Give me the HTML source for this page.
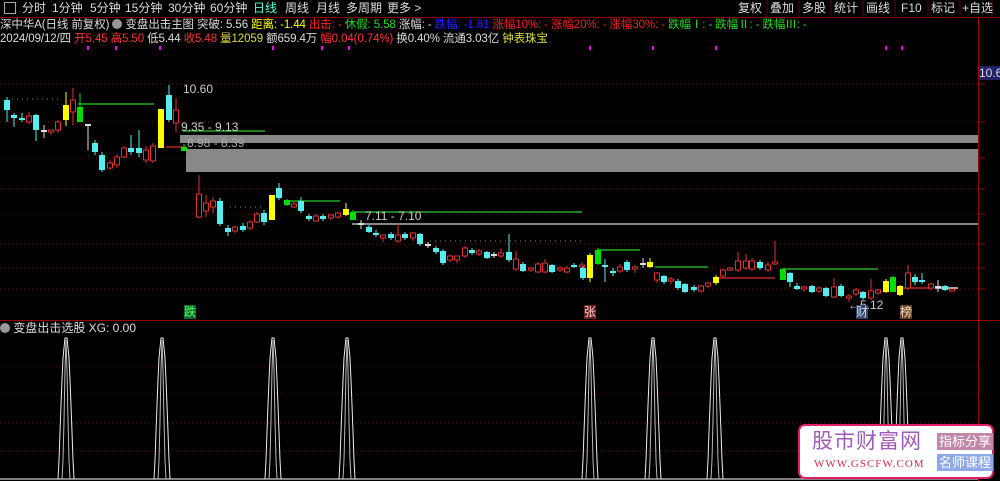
<!DOCTYPE html>
<html><head><meta charset="utf-8"><style>
body{margin:0;background:#000;width:1000px;height:481px;overflow:hidden;font-family:"Liberation Sans","Noto Sans CJK SC",sans-serif;}
#wrap{position:relative;width:1000px;height:481px;}
.t{position:absolute;font-size:12px;white-space:nowrap;line-height:14px;}
.tb{position:absolute;top:1px;color:#ddd;font-size:12px;line-height:14px;white-space:nowrap}
.hd{font-size:11.5px;letter-spacing:-0.1px}
</style></head><body><div id="wrap">
<svg id="s" width="1000" height="481" style="position:absolute;left:0;top:0"></svg>
<div style="position:absolute;left:4px;top:2px;width:10px;height:10px;border:1px solid #aaa"></div>
<div class="tb" style="left:22px">分时</div><div class="tb" style="left:52px">1分钟</div><div class="tb" style="left:90px">5分钟</div><div class="tb" style="left:125px">15分钟</div><div class="tb" style="left:168px">30分钟</div><div class="tb" style="left:210px">60分钟</div><div class="tb" style="left:253px;color:#5fd">日线</div><div class="tb" style="left:285px">周线</div><div class="tb" style="left:316px">月线</div><div class="tb" style="left:346px">多周期</div><div class="tb" style="left:387px">更多 &gt;</div>
<div class="t" style="left:735px;top:1px;color:#ddd;font-size:12px;word-spacing:0">
<span style="position:absolute;left:3px">复权</span><span style="position:absolute;left:35px">叠加</span><span style="position:absolute;left:67px">多股</span><span style="position:absolute;left:99px">统计</span><span style="position:absolute;left:131px">画线</span><span style="position:absolute;left:166px">F10</span><span style="position:absolute;left:196px">标记</span><span style="position:absolute;left:227px">+自选</span></div>
<div class="t hd" style="left:0;top:18px;color:#ddd">深中华A(日线 前复权) <span style="display:inline-block;width:10px;height:10px;border-radius:5px;background:#999;vertical-align:-1px"></span> 变盘出击主图 突破: 5.56 <span style="color:#ff0">距离: -1.44</span> <span style="color:#f22">出击: -</span> <span style="color:#2d2">休假: 5.58</span> 涨幅: - <span style="color:#22f">跌幅: -1.81</span> <span style="color:#e22">涨幅10%: - 涨幅20%: - 涨幅30%: -</span> <span style="color:#2d2">跌幅Ⅰ: - 跌幅Ⅱ: - 跌幅Ⅲ: -</span></div>
<div class="t hd" style="left:0;top:32px;color:#ddd">2024/09/12/四 <span style="color:#f33">开5.45 高5.50</span> 低5.44 <span style="color:#f33">收5.48</span> <span style="color:#dd4">量12059</span> 额659.4万 <span style="color:#f33">幅0.04(0.74%)</span> 换0.40% 流通3.03亿 <span style="color:#dd4">钟表珠宝</span></div>
<div class="t" style="left:0;top:321px;color:#ddd"><span style="display:inline-block;width:10px;height:10px;border-radius:5px;background:#999;vertical-align:-1px"></span> 变盘出击选股 XG: 0.00</div>
<div class="t" style="left:979px;top:66px;background:#226;color:#ddd;width:21px;overflow:hidden">10.6</div>
<div class="t" style="left:183px;top:82px;color:#ccc">10.60</div>
<div class="t" style="left:181px;top:120px;color:#ccc">9.35 - 9.13</div>
<div class="t" style="left:187px;top:136px;color:#aaa">8.98 - 8.39</div>
<div class="t" style="left:365px;top:209px;color:#ccc">7.11 - 7.10</div>
<div class="t" style="left:848px;top:298px;color:#ccc">←5.12</div>
<div class="t" style="left:184px;top:305px;background:#163;color:#5f5">跌</div>
<div class="t" style="left:584px;top:305px;background:#622;color:#fcc">张</div>
<div class="t" style="left:856px;top:305px;background:#346;color:#cde">财</div>
<div class="t" style="left:900px;top:305px;background:#642;color:#fdc">榜</div>
<div style="position:absolute;left:798px;top:424px;width:192px;height:51px;background:#fff;border:2px solid #e0206a;border-radius:7px">
<div class="t" style="left:12px;top:4px;font-size:21px;line-height:24px;color:#a05ab8;letter-spacing:1px">股市财富网</div>
<div class="t" style="left:14px;top:31px;font-size:11px;color:#d03050;font-family:'Liberation Serif',serif;letter-spacing:1px">WWW.GSCFW.COM</div>
<div class="t" style="left:137px;top:7px;background:#c087a8;color:#fff;font-size:13px;line-height:17px;padding:0 2px">指标分享</div>
<div class="t" style="left:137px;top:28px;background:#8fa8e8;color:#fff;font-size:13px;line-height:17px;padding:0 2px">名师课程</div>
</div>
</div>
<script>
const s=document.getElementById('s');let h='';
function L(x1,y1,x2,y2,c,w,d){h+=`<line x1="${x1}" y1="${y1}" x2="${x2}" y2="${y2}" stroke="${c}" stroke-width="${w||1}"${d?` stroke-dasharray="${d}"`:''}/>`}
function R(x,y,w,hh,f,st){h+=`<rect x="${x}" y="${y}" width="${w}" height="${hh}" fill="${f}"${st?` stroke="${st}"`:''}/>`}
L(0,17.5,1000,17.5,'#800');
[84,122,158,189,214,244,268,289,366,394,423,451].forEach(y=>L(0,y,978,y,'#6a1414',1,'1 3'));
L(978.5,18,978.5,481,'#900');L(0,320.5,1000,320.5,'#900');
[84,122,158,189,214,244,268,289].forEach(y=>L(979,y,985,y,'#900'));
[88,116,160,273,322,349,590,653,716,886,902].forEach(x=>L(x,46,x,50,'#f0f',2));
R(180,135,798,8,'#888');R(186,149,792,23,'#888');L(352,224,978,224,'#888',2);
const lines=[[78,154,104,'#2a2'],[183,265,131,'#2a2'],[166,186,147,'#b22'],[287,340,201,'#2a2'],[353,582,212,'#2a2'],[597,640,250,'#2a2'],[655,708,267,'#2a2'],[716,775,278,'#b22'],[783,878,269,'#2a2'],[900,930,288,'#b22'],[935,958,288,'#ddd']];
lines.forEach(a=>L(a[0],a[2],a[1],a[2],a[3],1.5));
[[12,60,99],[230,265,207],[430,585,241]].forEach(a=>L(a[0],a[2],a[1],a[2],'#888',1,'1 4'));
const C={r:'#d33',c:'#5ee',y:'#ff0',g:'#0d0',w:'#ddd'};
const k=[[7,100,110,97,122,'c'],[14,115,118,113,127,'c'],[22,118,120,113,122,'c'],[29,116,122,112,124,'r'],[36,115,130,114,141,'c'],[44,130,132,125,138,'w'],[51,130,132,130,135,'r'],[58,122,130,120,133,'r'],[66,105,120,92,126,'y'],[73,100,112,88,125,'r'],[80,107,122,93,122,'g'],[88,124,126,125,150,'w'],[95,143,152,140,155,'c'],[102,155,170,152,172,'c'],[110,163,168,160,170,'r'],[117,157,165,154,168,'r'],[124,148,157,146,158,'r'],[131,148,152,135,155,'c'],[139,148,153,130,157,'c'],[146,150,160,146,163,'r'],[153,146,161,143,163,'r'],[161,109,148,109,148,'y'],[169,95,120,85,122,'c'],[176,110,123,98,132,'r'],[184,147,151,144,151,'g'],[199,194,217,175,218,'r'],[206,203,211,195,217,'r'],[213,201,207,197,213,'r'],[220,201,224,198,226,'c'],[228,228,232,225,236,'c'],[235,227,231,226,233,'r'],[243,226,230,223,232,'c'],[250,222,228,220,230,'r'],[257,214,222,212,223,'r'],[264,213,222,210,225,'c'],[272,195,220,195,220,'y'],[279,188,198,183,200,'c'],[287,200,205,199,206,'g'],[294,204,207,202,208,'r'],[301,201,211,197,213,'c'],[309,216,219,214,221,'c'],[316,216,221,214,222,'r'],[323,216,219,214,221,'c'],[331,215,218,214,220,'r'],[338,213,217,212,219,'r'],[346,209,215,203,216,'y'],[353,212,220,210,220,'g'],[361,223,225,220,229,'w'],[369,227,232,225,233,'c'],[376,233,235,230,237,'c'],[383,235,238,235,242,'r'],[391,234,238,232,240,'c'],[398,235,241,224,243,'r'],[405,234,238,232,240,'c'],[413,233,238,232,241,'r'],[420,234,244,233,246,'c'],[428,244,246,242,248,'w'],[436,248,252,246,254,'c'],[443,251,263,249,265,'c'],[450,256,260,255,262,'r'],[457,256,260,256,263,'r'],[465,248,256,246,258,'r'],[472,250,253,248,255,'c'],[479,251,254,249,256,'r'],[487,252,258,251,259,'c'],[494,254,256,252,258,'w'],[501,253,256,248,258,'r'],[509,252,260,234,262,'c'],[516,259,269,251,271,'r'],[523,264,271,262,272,'c'],[531,268,270,267,272,'r'],[538,264,272,262,273,'r'],[545,263,272,259,273,'r'],[552,265,272,264,273,'c'],[560,268,270,266,272,'r'],[567,268,272,266,273,'r'],[574,265,267,263,268,'c'],[582,265,267,262,268,'r'],[583,268,278,266,280,'c'],[590,255,278,253,282,'y'],[598,250,264,248,265,'g'],[605,265,267,259,282,'c'],[613,271,273,268,276,'c'],[620,267,271,264,273,'r'],[627,262,270,260,272,'c'],[635,267,269,265,273,'r'],[643,263,265,258,268,'w'],[650,262,267,258,268,'y'],[657,273,280,272,283,'r'],[664,276,282,275,284,'c'],[671,279,281,277,284,'r'],[678,281,288,279,290,'c'],[685,284,292,283,293,'c'],[694,287,290,285,292,'c'],[701,286,291,285,293,'r'],[708,283,286,282,288,'r'],[716,277,283,275,285,'y'],[723,270,276,269,278,'r'],[730,268,270,267,271,'r'],[738,261,270,252,272,'r'],[746,261,268,254,270,'r'],[752,261,269,258,271,'r'],[760,262,268,260,270,'c'],[768,265,270,262,272,'r'],[775,262,264,241,265,'r'],[783,269,280,268,280,'g'],[790,273,282,272,287,'c'],[797,286,289,283,290,'c'],[804,287,289,286,292,'r'],[812,286,292,285,293,'c'],[819,288,291,286,293,'r'],[826,288,296,287,297,'c'],[834,287,297,278,298,'r'],[841,286,296,284,297,'c'],[849,296,298,294,302,'r'],[856,290,294,288,296,'r'],[863,292,298,291,300,'c'],[871,291,298,279,300,'r'],[878,290,293,289,295,'r'],[886,281,292,279,293,'y'],[893,277,292,276,292,'g'],[900,286,295,285,296,'y'],[908,273,288,265,290,'r'],[915,277,282,274,285,'c'],[922,280,282,273,284,'c'],[931,284,288,283,290,'r'],[938,286,288,280,292,'w'],[945,286,290,285,291,'c'],[952,289,291,289,291,'r']];
k.forEach(a=>{const[x,t,b,hi,lo,ty]=a;const c=C[ty];L(x,hi,x,lo,c);if(ty=='r')h+=`<rect x="${x-2.5}" y="${t}" width="5" height="${Math.max(b-t,1)}" fill="#000" stroke="${c}"/>`;else R(x-3,t,6,Math.max(b-t,1.5),c);});
L(0,479,978,479,'#fff');
[66,162,273,347,590,653,715,886,902].forEach(x=>{let p=`${x-8},479 ${x-7},460 ${x-6},432 ${x-5},405 ${x-4},380 ${x-3},358 ${x-1},338 ${x+1},338 ${x+3},358 ${x+4},380 ${x+5},405 ${x+6},432 ${x+7},460 ${x+8},479`;h+=`<polyline points="${p}" fill="none" stroke="#eee" stroke-width="1"/>`;let q=`${x-4},479 ${x-3},460 ${x-2},420 ${x-1},370 ${x},340 ${x+1},370 ${x+2},420 ${x+3},460 ${x+4},479`;h+=`<polyline points="${q}" fill="none" stroke="#bbb" stroke-width="1"/>`;});
[767,799,831,863,895,928,960,992].forEach(x=>L(x,0,x,17,'#600'));
s.innerHTML=h;
</script>
</body></html>
